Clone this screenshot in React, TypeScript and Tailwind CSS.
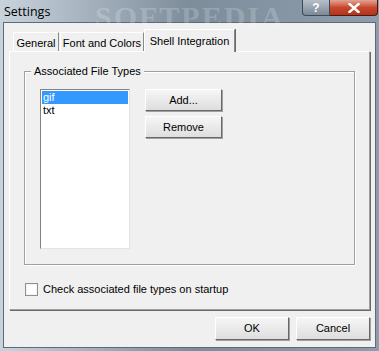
import React from 'react';

const font = { fontFamily: '"Liberation Sans", Arial, sans-serif' };

const WinButton: React.FC<{ label: string; className?: string }> = ({ label, className }) => (
  <button
    className={`flex items-center justify-center bg-gradient-to-b from-[#f6f6f6] to-[#dedede] border border-t-white border-l-white border-r-[#696969] border-b-[#696969] shadow-[1px_1px_0_#a0a0a0] text-[11px] text-black ${className ?? ''}`}
  >
    {label}
  </button>
);

const Tab: React.FC<{ label: string; active?: boolean; className?: string }> = ({ label, active, className }) => (
  <div
    className={
      active
        ? `relative z-10 -mb-px h-[23px] pt-[3px] flex justify-center whitespace-nowrap bg-[#f0f0f0] border border-b-0 border-t-white border-l-white border-r-[#8a8a8a] shadow-[1px_0_0_#696969] text-[11px] ${className ?? ''}`
        : `h-[19px] pt-[2px] flex justify-center whitespace-nowrap bg-[#f0f0f0] border border-b-0 border-t-white border-l-white border-r-[#8a8a8a] text-[11px] ${className ?? ''}`
    }
  >
    {label}
  </div>
);

export default function App() {
  return (
    <div
      className="relative w-[379px] h-[351px] overflow-hidden flex flex-col bg-gradient-to-r from-[#c9d3dd] via-[#7d8d9b] to-[#8d9dab] px-[3px] pb-[3px]"
      style={font}
    >
      {/* watermark in title */}
      <div className="absolute left-[95px] top-[-6px] text-[30px] font-bold tracking-[2px] text-white/20" style={{ fontFamily: '"Liberation Serif", serif' }}>
        SOFTPEDIA
      </div>

      {/* title bar */}
      <div className="relative flex items-start justify-between h-[22px] shrink-0">
        <span className="pt-[3px] pl-[1px] text-[12.5px] text-black" style={{ fontFamily: '"Open Sans", "DejaVu Sans", sans-serif' }}>
          Settings
        </span>
        <div className="flex -mr-[2px]">
          <div className="w-[28px] h-[16px] rounded-bl-[4px] border border-t-0 border-[#3d4a57] bg-gradient-to-b from-[#b5c0cb] to-[#7d8995] flex items-center justify-center text-white text-[12px] font-bold leading-none">
            ?
          </div>
          <div className="w-[48px] h-[16px] rounded-br-[4px] border border-t-0 border-l-0 border-[#4a1a12] bg-gradient-to-b from-[#e0a596] via-[#c7462d] to-[#b53418] flex items-center justify-center">
            <svg width="12" height="10" viewBox="0 0 12 10">
              <path d="M1.5 1 L10.5 9 M10.5 1 L1.5 9" stroke="#ffffff" strokeWidth="2.4" strokeLinecap="square" />
            </svg>
          </div>
        </div>
      </div>

      {/* client */}
      <div className="flex-1 flex flex-col bg-[#f0f0f0] border border-[#5d6b78] pt-[6px] px-[5px]">
        {/* tab strip */}
        <div className="flex items-end pl-[4px] h-[22px] relative">
          <Tab label="General" className="w-[46px]" />
          <Tab label="Font and Colors" className="w-[84px] ml-[1px]" />
          <Tab label="Shell Integration" active className="w-[91px]" />
        </div>

        {/* tab page */}
        <div className="h-[259px] border border-t-white border-l-white border-r-[#a0a0a0] border-b-[#a0a0a0] shadow-[1px_1px_0_#696969] pt-[19px] px-[14px]">
          {/* group box */}
          <div className="relative h-[194px] border border-[#a0a0a0] shadow-[inset_1px_1px_0_#ffffff,1px_1px_0_#ffffff] pt-[17px] pl-[15px]">
            <span className="absolute left-[6px] -top-[7px] bg-[#f0f0f0] px-[3px] text-[11px] leading-[13px] text-black">
              Associated File Types
            </span>
            <div className="flex items-start">
              <div className="w-[90px] h-[160px] bg-white border border-t-[#828282] border-l-[#828282] border-r-[#e3e3e3] border-b-[#e3e3e3] p-px text-[11px] leading-[13px]">
                <div className="bg-[#3399ff] text-white pl-[1px]">gif</div>
                <div className="pl-[1px] text-black">txt</div>
              </div>
              <div className="flex flex-col gap-[5px] ml-[15px]">
                <WinButton label="Add..." className="w-[77px] h-[22px]" />
                <WinButton label="Remove" className="w-[77px] h-[22px]" />
              </div>
            </div>
          </div>

          {/* checkbox */}
          <div className="flex items-center mt-[18px] ml-px">
            <div className="w-[13px] h-[13px] bg-white border border-[#8e8f8f] shadow-[inset_0_0_0_1px_#f4f4f4]" />
            <span className="ml-[5px] text-[11px] text-black leading-[13px]">Check associated file types on startup</span>
          </div>
        </div>

        {/* footer buttons */}
        <div className="flex justify-end gap-[7px] mt-[7px]">
          <WinButton label="OK" className="w-[74px] h-[23px]" />
          <WinButton label="Cancel" className="w-[74px] h-[23px]" />
        </div>
      </div>
    </div>
  );
}
